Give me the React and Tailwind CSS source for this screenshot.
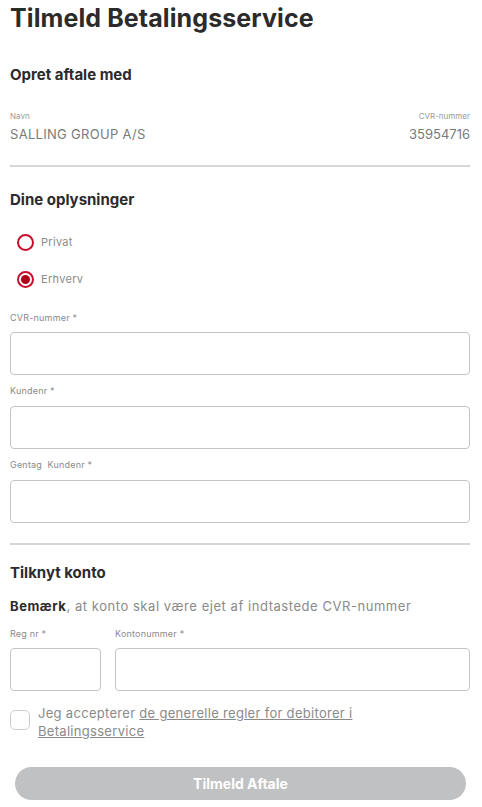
export default function App() {
  const font = { fontFamily: "Inter, 'Liberation Sans', sans-serif" };
  return (
    <div className="w-[482px] h-[807px] bg-white pl-[10px] pr-[12px] text-[#2b2b2b] overflow-hidden" style={font}>
      <h1 className="text-[25px] font-bold leading-[34px] pt-[1px] tracking-[0.1px]">Tilmeld Betalingsservice</h1>

      {/* Opret aftale med */}
      <h2 className="mt-[30px] text-[15px] font-bold leading-[20px]">Opret aftale med</h2>
      <div className="mt-[25px] flex justify-between">
        <div>
          <div className="text-[8px] leading-[12px] text-[#9a9a9a]">Navn</div>
          <div className="mt-[4px] text-[13px] leading-[16px] tracking-[0.3px] text-[#7a7a7a]">SALLING GROUP A/S</div>
        </div>
        <div className="text-right">
          <div className="text-[8px] leading-[12px] text-[#9a9a9a]">CVR-nummer</div>
          <div className="mt-[4px] text-[13px] leading-[16px] text-[#7a7a7a]">35954716</div>
        </div>
      </div>
      <div className="mt-[23px] h-[2px] bg-[#d6d6d6]" />

      {/* Dine oplysninger */}
      <h2 className="mt-[23px] text-[15px] font-bold leading-[20px]">Dine oplysninger</h2>
      <div className="mt-[24px] flex items-center gap-[7px] pl-[7px]">
        <span className="w-[17px] h-[17px] rounded-full border-2 border-[#c8102e]" />
        <span className="text-[11px] tracking-[0.3px] text-[#8a8a8a]">Privat</span>
      </div>
      <div className="mt-[20px] flex items-center gap-[7px] pl-[7px]">
        <span className="w-[17px] h-[17px] rounded-full border-2 border-[#c8102e] flex items-center justify-center">
          <span className="w-[9px] h-[9px] rounded-full bg-[#b0001a]" />
        </span>
        <span className="text-[11px] tracking-[0.3px] text-[#8a8a8a]">Erhverv</span>
      </div>

      <label className="block mt-[24px] text-[9px] leading-[12px] tracking-[0.2px] text-[#8a8a8a]">CVR-nummer *</label>
      <input className="block mt-[8px] w-full h-[43px] rounded-[4px] border border-[#c4c4c4] outline-none" />
      <label className="block mt-[10px] text-[9px] leading-[12px] tracking-[0.2px] text-[#8a8a8a]">Kundenr *</label>
      <input className="block mt-[9px] w-full h-[43px] rounded-[4px] border border-[#c4c4c4] outline-none" />
      <label className="block mt-[10px] text-[9px] leading-[12px] tracking-[0.2px] text-[#8a8a8a]">Gentag&nbsp; Kundenr *</label>
      <input className="block mt-[9px] w-full h-[43px] rounded-[4px] border border-[#c4c4c4] outline-none" />

      <div className="mt-[20px] h-[2px] bg-[#d6d6d6]" />

      {/* Tilknyt konto */}
      <h2 className="mt-[18px] text-[15px] font-bold leading-[20px]">Tilknyt konto</h2>
      <p className="mt-[14px] text-[13px] leading-[18px] tracking-[0.55px] text-[#8a8a8a]">
        <span className="font-bold text-[#2b2b2b]">Bemærk</span>, at konto skal være ejet af indtastede CVR-nummer
      </p>
      <div className="mt-[13px] flex gap-[14px]">
        <div className="w-[91px]">
          <label className="block text-[9px] leading-[12px] tracking-[0.2px] text-[#8a8a8a]">Reg nr *</label>
          <input className="block mt-[8px] w-full h-[43px] rounded-[4px] border border-[#c4c4c4] outline-none" />
        </div>
        <div className="flex-1">
          <label className="block text-[9px] leading-[12px] tracking-[0.2px] text-[#8a8a8a]">Kontonummer *</label>
          <input className="block mt-[8px] w-full h-[43px] rounded-[4px] border border-[#c4c4c4] outline-none" />
        </div>
      </div>

      <div className="mt-[13px] flex gap-[8px]">
        <span className="mt-[6px] w-[20px] h-[20px] shrink-0 rounded-[5px] border border-[#cfcfcf]" />
        <div className="text-[13px] leading-[18px] tracking-[0.3px] text-[#8a8a8a]">
          <div>
            Jeg accepterer <a className="underline">de generelle regler for debitorer i</a>
          </div>
          <div>
            <a className="underline">Betalingsservice</a>
          </div>
        </div>
      </div>

      <button className="mt-[27px] ml-[5px] w-[451px] h-[33px] rounded-full bg-[#c0c1c3] text-white text-[14px] font-bold">
        Tilmeld Aftale
      </button>
    </div>
  );
}
